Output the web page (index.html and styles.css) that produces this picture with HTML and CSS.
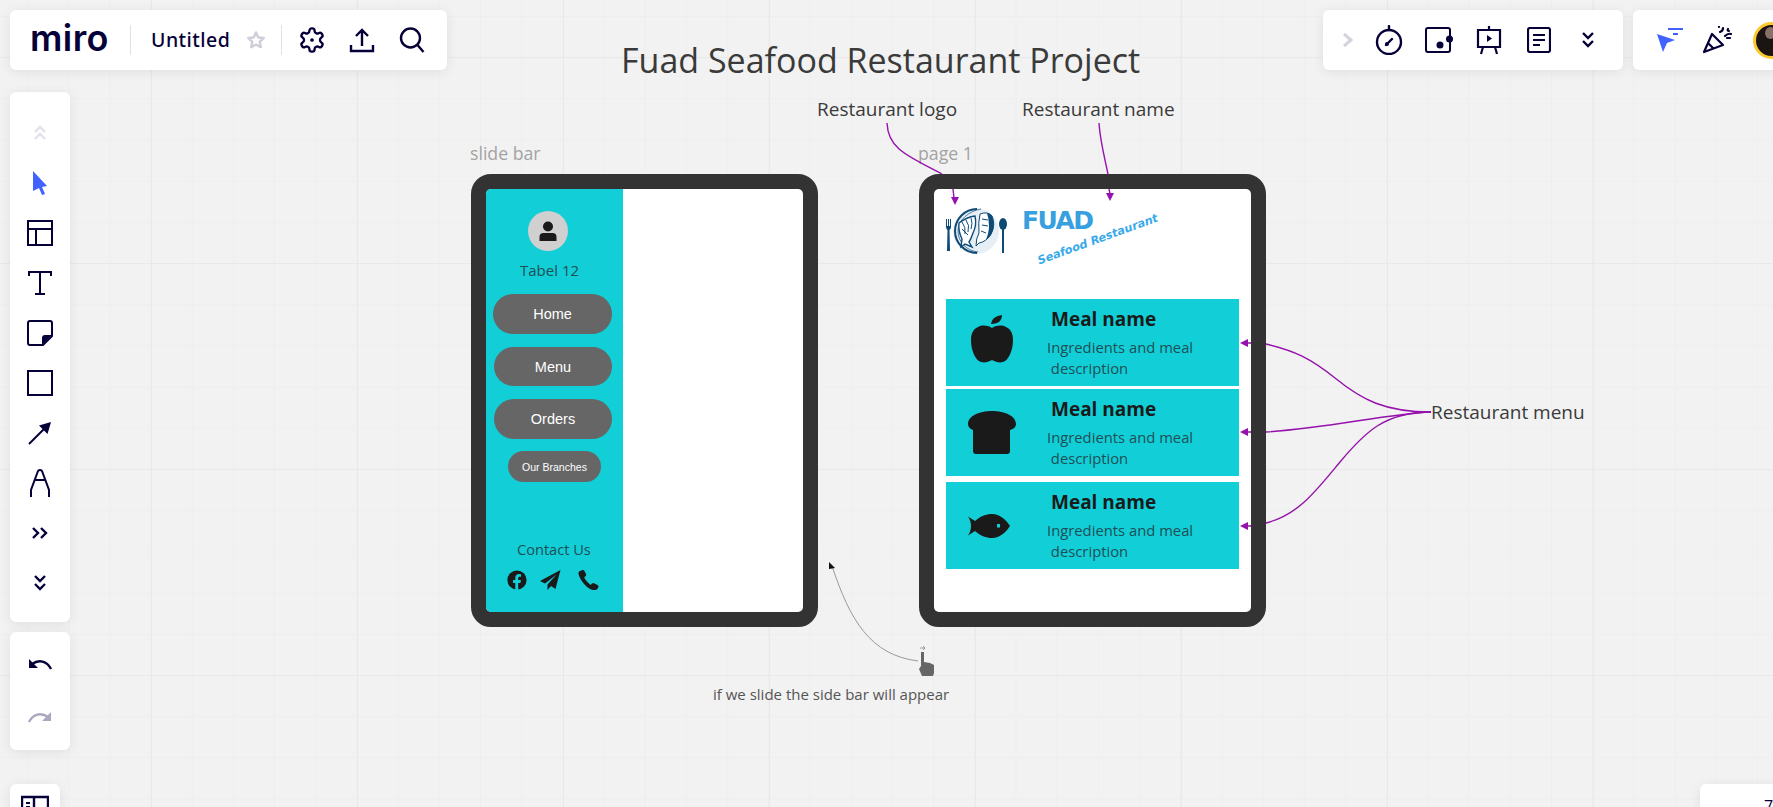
FILE: index.html
```html
<!doctype html>
<html lang="en">
    <head>
        <meta charset="UTF-8" />
        <meta name="viewport" content="width=device-width, initial-scale=1.0" />
        <title>Untitled, Miro</title>
        <link rel="stylesheet" href="styles.css">
    </head>
    <body>
        <main class="board">
            <h1 class="board-title">Fuad Seafood Restaurant Project</h1>
            <div class="note note-logo">Restaurant logo</div>
            <div class="note note-name">Restaurant name</div>
            <div class="note note-menu">Restaurant menu</div>
            <div class="caption caption-slide">slide bar</div>
            <div class="caption caption-page">page 1</div>
            <div class="hint">if we slide the side bar will appear</div>

            <!-- tablet 1: side bar open -->
            <section class="tablet tablet-slide">
                <div class="tablet-screen">
                    <aside class="sidebar">
                        <div class="avatar">
                            <svg width="22" height="22" viewBox="0 0 22 22" fill="#1a1a1a">
                                <circle cx="11" cy="6.5" r="5"></circle>
                                <path d="M2.5 21v-4q0-4 4-4h9q4 0 4 4v4z"></path>
                            </svg>
                        </div>
                        <div class="table-name">Tabel 12</div>
                        <a class="pill pill-home">Home</a>
                        <a class="pill pill-menu">Menu</a>
                        <a class="pill pill-orders">Orders</a>
                        <a class="pill pill-small">Our Branches</a>
                        <div class="contact">
                            <div class="contact-title">Contact Us</div>
                            <div class="contact-icons">
                                <svg width="20" height="20" viewBox="0 0 20 20">
                                    <circle cx="10" cy="10" r="9.6" fill="#1a1a1a"></circle>
                                    <path fill="#12ced6" d="M8.3 20v-7H6v-3h2.3V7.8c0-2.5 1.5-3.8 3.7-3.8l2 .2v2.5h-1.2c-1.2 0-1.6.7-1.6 1.500V10h2.700l-.4 3h-2.300v7z"></path>
                                </svg>
                                <svg width="21" height="20" viewBox="0 0 21 20" fill="#1a1a1a">
                                    <path d="M20.500 0 0 11l5 2.500L16.500 4.500 7.500 14.500V20l3.500-4 4.500 3z"></path>
                                </svg>
                                <svg width="21" height="20" viewBox="0 0 21 20" fill="#1a1a1a">
                                    <path d="M4.500 0 1 1.500C0 2.500 .5 5 2 8c2 4 5.500 8.500 10 11 2 1 5 1.500 7 .5l1.500-2.500c.2-1-.2-1.500-1-2l-3.500-1.800c-.8-.4-1.500-.2-2 .3l-1.300 1.500C10 13 7.500 10 6.200 7.500l1.500-1.500c.5-.5.6-1 .4-1.700L6.300 .8C6 .2 5.300-.2 4.500 0z"></path>
                                </svg>
                            </div>
                        </div>
                    </aside>
                </div>
            </section>

            <!-- tablet 2: page 1 -->
            <section class="tablet tablet-page">
                <div class="tablet-screen tablet-screen-page">
                    <header class="brand">
                        <svg class="brand-mark" width="64" height="48" viewBox="0 0 64 48">
                            <g fill="#0e4a76">
                                <path d="M1 12h1v7h1v-7h1v7h1v-7h1v8q0 2-1.500 3l.5 21h-3l.5-21Q1 22 1 20z"></path>
                                <ellipse cx="58" cy="17" rx="4" ry="6"></ellipse>
                                <rect x="57" y="21" width="2" height="25"></rect>
                            </g>
                            <circle cx="31" cy="24" r="23" fill="#e6eff5"></circle>
                            <path d="M32 2C20 2 10 12 10 24s10 22 22 22" fill="none" stroke="#0e4a76" stroke-width="2"></path>
                            <path d="M36 2C24 4 13 13 13 24s9 20 20 21" fill="none" stroke="#0e4a76" stroke-width=".7"></path>
                            <!-- fish -->
                            <path d="M14 16q8-6 16-7 2 9-2 17-2 6-4 9l3 5-7-3-4 3 1-8q-4-8-3-16z" fill="#fff" stroke="#0e4a76" stroke-width="1.400"></path>
                            <path d="M17 15q4 5 3 12M21 13q4 5 2 12M26 11q2 5 0 11M17 22l6 6" stroke="#0e4a76" fill="none"></path>
                            <!-- shrimp -->
                            <path d="M35 7q8-3 12 2 4 9-1 18-5 8-12 9l-3 3q0-8 3-13-1-10 1-19z" fill="#fff" stroke="#0e4a76"></path>
                            <path d="M42 6q5 1 6 6 2 9-2 16-2 3-5 5 3-8 3-14 0-7-2-13z" fill="#0e4a76"></path>
                            <path d="M37 12l6 1M37 18l6 1M36 24l5 2" stroke="#0e4a76" fill="none"></path>
                        </svg>
                        <div class="brand-name">FUAD</div>
                        <div class="brand-tag">Seafood Restaurant</div>
                    </header>
                    <div class="meal-list">
                        <article class="meal">
                            <div class="meal-icon">
                                <svg width="44" height="58" viewBox="0 0 44 58" fill="#1a1a1a">
                                    <path d="M21 10c1-6 5-8 11-9 0 5-3 9-11 9z"></path>
                                    <path d="M22 14c-5-3-10-3-14-1C3 15 1 20 1 26c0 10 4 20 10 22 4 1 7 0 11-2 4 2 7 3 11 2 6-2 10-12 10-22 0-6-2-11-7-13-4-2-9-2-14 1z"></path>
                                </svg>
                            </div>
                            <div class="meal-text">
                                <h2>Meal name</h2>
                                <p>Ingredients and meal<br>&nbsp;description</p>
                            </div>
                        </article>
                        <article class="meal">
                            <div class="meal-icon">
                                <svg width="48" height="44" viewBox="0 0 48 44" fill="#1a1a1a">
                                    <path d="M24 0C11 0 0 5 0 13c0 3 2 5 5 6v21c0 2 1 3 3 3h31c2 0 3-1 3-3V19c4-1 6-3 6-6C48 5 37 0 24 0z"></path>
                                </svg>
                            </div>
                            <div class="meal-text">
                                <h2>Meal name</h2>
                                <p>Ingredients and meal<br>&nbsp;description</p>
                            </div>
                        </article>
                        <article class="meal meal-last">
                            <div class="meal-icon meal-icon-fish">
                                <svg width="42" height="24" viewBox="0 0 42 24">
                                    <path fill="#1a1a1a" d="M0 2.500 7 7C12 2.500 18 0 24 0c8 0 14 6 18 12-4 6-10 12-18 12-6 0-12-2.500-17-7L0 21.500c2-3 3-6 3-9.500S2 5.500 0 2.500z"></path>
                                    <rect x="29" y="10" width="3" height="3.500" fill="#12ced6"></rect>
                                </svg>
                            </div>
                            <div class="meal-text">
                                <h2>Meal name</h2>
                                <p>Ingredients and meal<br>&nbsp;description</p>
                            </div>
                        </article>
                    </div>
                </div>
            </section>

            <!-- connectors, drawn in board coordinates -->
            <svg class="connectors" width="1773" height="807" viewBox="0 0 1773 807" fill="none">
                <g stroke="#9510ac" stroke-width="1.400">
                    <path d="M887 123C888 148 905 155 942 174"></path>
                    <path d="M953 189L954 198"></path>
                    <path d="M1099 123C1100 140 1104 155 1108 174"></path>
                    <path d="M1109 189L1110 194"></path>
                    <path d="M1431 412C1385 412 1362 400 1335 378 1310 358 1295 351 1266 344"></path>
                    <path d="M1431 412C1385 414 1330 428 1266 432"></path>
                    <path d="M1431 412C1385 412 1365 432 1340 462 1315 492 1298 515 1266 523"></path>
                    <path d="M1251 343H1246M1251 432H1246M1251 526H1246"></path>
                </g>
                <g fill="#9510ac">
                    <path d="M955 205 951 197H959z"></path>
                    <path d="M1110 201 1106 193H1114z"></path>
                    <path d="M1240 343 1248 339V347z"></path>
                    <path d="M1240 432 1248 428V436z"></path>
                    <path d="M1240 526 1248 522V530z"></path>
                </g>
                <path d="M918 661C870 655 850 620 832 566" stroke="#999" stroke-width="1"></path>
                <path d="M829 562 835 568 829 569z" fill="#111"></path>
                <path d="M920 648h5M923 646l2 2-2 2" stroke="#666" stroke-width=".6"></path>
                <path fill="#666" d="M921 652h3v10l6 1 4 2v8l-1 3h-11l-3-7 2-3z"></path>
            </svg>
        </main>

        <!-- board ui -->
        <div class="panel panel-top">
            <span class="miro-logo">miro</span>
            <span class="panel-divider"></span>
            <span class="board-name">Untitled</span>
            <svg class="star" width="20" height="20" viewBox="0 0 24 24" fill="none" stroke="#cfcfdb" stroke-width="3" stroke-linejoin="round">
                <path d="M12 3l2.800 5.900 6.400.8-4.700 4.400 1.200 6.400L12 17.400l-5.700 3.100 1.200-6.400-4.700-4.400 6.400-.8z"></path>
            </svg>
            <span class="panel-divider"></span>
            <div class="top-tools">
                <svg width="28" height="28" viewBox="0 0 24 24" fill="none" stroke="#050038" stroke-width="2" stroke-linejoin="round">
                    <path d="M12.220 2h-.44a2 2 0 0 0-2 2v.18a2 2 0 0 1-1 1.730l-.43.25a2 2 0 0 1-2 0l-.15-.08a2 2 0 0 0-2.730.73l-.22.38a2 2 0 0 0 .73 2.730l.15.1a2 2 0 0 1 1 1.720v.51a2 2 0 0 1-1 1.740l-.15.09a2 2 0 0 0-.73 2.730l.22.38a2 2 0 0 0 2.730.73l.15-.08a2 2 0 0 1 2 0l.43.25a2 2 0 0 1 1 1.730V20a2 2 0 0 0 2 2h.44a2 2 0 0 0 2-2v-.18a2 2 0 0 1 1-1.730l.43-.25a2 2 0 0 1 2 0l.15.08a2 2 0 0 0 2.730-.73l.22-.39a2 2 0 0 0-.73-2.730l-.15-.08a2 2 0 0 1-1-1.740v-.5a2 2 0 0 1 1-1.740l.15-.09a2 2 0 0 0 .73-2.730l-.22-.38a2 2 0 0 0-2.730-.73l-.15.08a2 2 0 0 1-2 0l-.43-.25a2 2 0 0 1-1-1.730V4a2 2 0 0 0-2-2z"></path>
                    <circle cx="12" cy="12" r="1.600" fill="#050038" stroke="none"></circle>
                </svg>
                <svg width="28" height="28" viewBox="0 0 28 28" fill="none" stroke="#050038" stroke-width="2.400">
                    <path d="M14 20V4M8 10l6-6 6 6M3 19v6h22v-6"></path>
                </svg>
                <svg width="28" height="28" viewBox="0 0 28 28" fill="none" stroke="#050038" stroke-width="2.400">
                    <circle cx="12.500" cy="12" r="9.500"></circle>
                    <path d="M19.500 19l6 7"></path>
                </svg>
            </div>
        </div>

        <div class="panel panel-tools">
            <div class="tool">
                <svg width="14" height="16" viewBox="0 0 14 16" fill="none" stroke="#e2e2ea" stroke-width="2.400">
                    <path d="M2 7l5-5 5 5M2 14l5-5 5 5"></path>
                </svg>
            </div>
            <div class="tool">
                <svg width="16" height="26" viewBox="0 0 16 26">
                    <path fill="#4262ff" d="M1 1l14 15-5 1 3 7-3 1-3-7-6 3z"></path>
                </svg>
            </div>
            <div class="tool">
                <svg width="26" height="26" viewBox="0 0 26 26" fill="none" stroke="#050038" stroke-width="2">
                    <path d="M1 1h24v24H1zM1 9h24M9 9v16"></path>
                </svg>
            </div>
            <div class="tool">
                <svg width="24" height="24" viewBox="0 0 24 24" fill="none" stroke="#050038" stroke-width="2">
                    <path d="M1 5V1h22v4M12 1v22M7 23h10"></path>
                </svg>
            </div>
            <div class="tool">
                <svg width="26" height="26" viewBox="0 0 26 26">
                    <path d="M3 1h20q2 0 2 2v13l-9 9H3q-2 0-2-2V3q0-2 2-2z" fill="none" stroke="#050038" stroke-width="2"></path>
                    <path d="M25 15h-7q-3 0-3 3v7z" fill="#050038"></path>
                </svg>
            </div>
            <div class="tool">
                <svg width="26" height="26" viewBox="0 0 26 26" fill="none" stroke="#050038" stroke-width="2">
                    <path d="M1 1h24v24H1z"></path>
                </svg>
            </div>
            <div class="tool">
                <svg width="24" height="24" viewBox="0 0 24 24">
                    <path d="M1 23 16 8" stroke="#050038" stroke-width="2"></path>
                    <path d="M23 1 11 4.500l8.500 8.500z" fill="#050038"></path>
                </svg>
            </div>
            <div class="tool">
                <svg width="22" height="30" viewBox="0 0 22 30" fill="none" stroke="#050038" stroke-width="2">
                    <path d="M2 29v-7L9 3q2-2 4 0l7 19v7M6 12h10"></path>
                </svg>
            </div>
            <div class="tool">
                <svg width="16" height="12" viewBox="0 0 16 12" fill="none" stroke="#050038" stroke-width="2.400">
                    <path d="M1 1l5 5-5 5M9 1l5 5-5 5"></path>
                </svg>
            </div>
            <div class="tool">
                <svg width="12" height="16" viewBox="0 0 12 16" fill="none" stroke="#050038" stroke-width="2.400">
                    <path d="M1 1l5 5 5-5M1 9l5 5 5-5"></path>
                </svg>
            </div>
        </div>

        <div class="panel panel-history">
            <div class="tool">
                <svg width="24" height="12" viewBox="0 0 24 12">
                    <path d="M23 11C19 3 11 1 4 6" fill="none" stroke="#050038" stroke-width="2.400"></path>
                    <path d="M1 1v9h9z" fill="#050038"></path>
                </svg>
            </div>
            <div class="tool">
                <svg width="24" height="12" viewBox="0 0 24 12">
                    <path d="M1 11C5 3 13 1 20 6" fill="none" stroke="#aaa8be" stroke-width="2.400"></path>
                    <path d="M23 1v9h-9z" fill="#aaa8be"></path>
                </svg>
            </div>
        </div>

        <div class="panel panel-corner">
            <svg width="28" height="28" viewBox="0 0 28 28" fill="none" stroke="#050038" stroke-width="2.400">
                <path d="M1 2h26v24H1zM13 2v24"></path>
                <path d="M5 8h4M5 12h4" stroke-width="2"></path>
            </svg>
        </div>

        <div class="panel panel-zoom"><span class="zoom-value">7</span></div>

        <div class="panel panel-apps">
            <svg width="12" height="16" viewBox="0 0 12 16" fill="none" stroke="#d4d3df" stroke-width="3">
                <path d="M2 2l7 6-7 6"></path>
            </svg>
            <svg width="28" height="30" viewBox="0 0 28 30" fill="none" stroke="#050038" stroke-width="2.400">
                <circle cx="14" cy="17" r="12"></circle>
                <path d="M14 1v4M11 20l6-6" stroke-linecap="round"></path>
                <circle cx="12" cy="19" r="2" fill="#050038" stroke="none"></circle>
            </svg>
            <svg width="28" height="28" viewBox="0 0 28 28">
                <path d="M23 2H3Q1 2 1 4v20q0 2 2 2h20q2 0 2-2V4q0-2-2-2z" fill="none" stroke="#050038" stroke-width="2"></path>
                <circle cx="15" cy="19" r="3.500" fill="#050038"></circle>
                <circle cx="24.500" cy="13" r="3.500" fill="#050038"></circle>
            </svg>
            <svg width="26" height="30" viewBox="0 0 26 30" fill="none" stroke="#050038" stroke-width="2.200">
                <path d="M2 5h22v17H2zM13 1v4M7 22l-2 7M19 22l2 7"></path>
                <path d="M11 10l5 3.500-5 3.500z" fill="#050038" stroke="none"></path>
            </svg>
            <svg width="24" height="26" viewBox="0 0 24 26" fill="none" stroke="#050038" stroke-width="2.200">
                <path d="M3 1h18q2 0 2 2v20q0 2-2 2H3q-2 0-2-2V3q0-2 2-2zM6 8h12M6 13h12M6 18h7"></path>
            </svg>
            <svg width="12" height="16" viewBox="0 0 12 16" fill="none" stroke="#050038" stroke-width="2.400">
                <path d="M1 1l5 5 5-5M1 9l5 5 5-5"></path>
            </svg>
        </div>

        <div class="panel panel-user">
            <svg width="27" height="24" viewBox="0 0 27 24">
                <path fill="#4262ff" d="M0 6l18 6-8 3-4 9z"></path>
                <path d="M11 1h15M16 6h5" stroke="#4262ff" stroke-width="2"></path>
            </svg>
            <svg width="29" height="28" viewBox="0 0 29 28" fill="none" stroke="#050038" stroke-width="2.200" stroke-linejoin="round">
                <path d="M1 26 9 8l11 11zM5 17l6 6"></path>
                <path d="M17 6q3-1 3-4M22 10q3-3 6-2M16 1h.01M25 3q-1 2 1 2M24 12h3" stroke-linecap="round"></path>
            </svg>
            <div class="user-photo"><span class="user-head"></span></div>
        </div>
    </body>
</html>
```

FILE: styles.css
```css
* {
    margin: 0;
    padding: 0;
    box-sizing: border-box;
}

body {
    width: 1773px;
    height: 807px;
    overflow: hidden;
    position: relative;
    font-family: "Open Sans", sans-serif;
    background: #f2f2f2;
}

.board {
    position: absolute;
    top: 0;
    left: 0;
    width: 1773px;
    height: 807px;
    background-color: #f2f2f2;
    background-image:
        linear-gradient(to right, #e9e9e9 1.5px, transparent 1.5px),
        linear-gradient(to bottom, #e9e9e9 1.5px, transparent 1.5px),
        linear-gradient(to right, #eeeeee 1px, transparent 1px),
        linear-gradient(to bottom, #eeeeee 1px, transparent 1px);
    background-size: 206px 206px, 206px 206px, 41.2px 41.2px, 41.2px 41.2px;
    background-position: 151px 0, 0 57px, 27px 0, 0 16px;
}

/* things placed on the board */

.board-title {
    position: absolute;
    left: 621px;
    top: 37px;
    font-size: 34px;
    line-height: 46px;
    font-weight: 400;
    color: #3a3a3a;
    white-space: nowrap;
}

.note {
    position: absolute;
    font-size: 19px;
    line-height: 25px;
    color: #3a3a3a;
    white-space: nowrap;
}

.note-logo {
    left: 817px;
    top: 97px;
}

.note-name {
    left: 1022px;
    top: 97px;
}

.note-menu {
    left: 1431px;
    top: 400px;
}

.caption {
    position: absolute;
    font-size: 17.7px;
    line-height: 24px;
    color: #a3a3a3;
    white-space: nowrap;
}

.caption-slide {
    left: 470px;
    top: 141px;
}

.caption-page {
    left: 918px;
    top: 141px;
}

.hint {
    position: absolute;
    left: 713px;
    top: 684px;
    font-size: 15px;
    line-height: 21px;
    color: #555;
    white-space: nowrap;
}

.connectors {
    position: absolute;
    top: 0;
    left: 0;
    pointer-events: none;
}

/* tablets */

.tablet {
    position: absolute;
    top: 174px;
    width: 347px;
    height: 453px;
    border: 15px solid #333;
    border-radius: 20px;
    background: #333;
}

.tablet-slide {
    left: 471px;
}

.tablet-page {
    left: 919px;
}

.tablet-screen {
    display: flex;
    height: 100%;
    background: #fff;
    border-radius: 5px;
    overflow: hidden;
}

.tablet-screen-page {
    flex-direction: column;
}

/* side bar */

.sidebar {
    width: 137px;
    height: 100%;
    padding-top: 22px;
    padding-bottom: 22px;
    background: #12ced6;
    display: flex;
    flex-direction: column;
    align-items: flex-start;
}

.avatar {
    width: 40px;
    height: 40px;
    margin-left: 42px;
    border-radius: 50%;
    background: #d0d0d0;
    display: flex;
    align-items: center;
    justify-content: center;
}

.table-name {
    margin-top: 9px;
    margin-left: 34px;
    font-size: 15px;
    line-height: 20px;
    color: #1f4f56;
}

.pill {
    display: flex;
    align-items: center;
    justify-content: center;
    background: #666;
    color: #fff;
    border-radius: 20px;
    font-family: "Liberation Sans", sans-serif;
    font-size: 14.5px;
}

.pill-home {
    width: 119px;
    height: 40px;
    margin-top: 14px;
    margin-left: 7px;
}

.pill-menu {
    width: 118px;
    height: 39px;
    margin-top: 13px;
    margin-left: 8px;
}

.pill-orders {
    width: 118px;
    height: 40px;
    margin-top: 13px;
    margin-left: 8px;
}

.pill-small {
    width: 93px;
    height: 31px;
    margin-top: 12px;
    margin-left: 22px;
    font-size: 10.5px;
}

.contact {
    margin-top: auto;
    width: 100%;
    padding-left: 21px;
}

.contact-title {
    margin-left: 10px;
    font-size: 14.6px;
    line-height: 20px;
    color: #1f4f56;
    margin-bottom: 11px;
}

.contact-icons {
    display: flex;
    align-items: center;
    gap: 13px;
}

.contact-icons svg + svg + svg {
    margin-left: 4px;
}

/* page 1 */

.brand {
    position: relative;
    height: 110px;
    flex-shrink: 0;
}

.brand-mark {
    position: absolute;
    left: 11px;
    top: 18px;
}

.brand-name {
    position: absolute;
    left: 88px;
    top: 17px;
    font-family: "DejaVu Sans", sans-serif;
    font-size: 25px;
    line-height: 30px;
    font-weight: 700;
    letter-spacing: -1.6px;
    color: #38a0de;
}

.brand-tag {
    position: absolute;
    left: 100px;
    top: 42px;
    font-family: "DejaVu Sans", sans-serif;
    font-size: 11.4px;
    line-height: 16px;
    font-weight: 700;
    font-style: italic;
    color: #3aa9ea;
    white-space: nowrap;
    transform: rotate(-20deg);
}

.meal-list {
    padding: 0 12px;
    display: flex;
    flex-direction: column;
}

.meal {
    height: 87px;
    margin-bottom: 3px;
    background: #12ced6;
    display: flex;
}

.meal-last {
    margin-top: 3px;
}

.meal-icon {
    width: 92px;
    margin-right: 9px;
    flex-shrink: 0;
    display: flex;
    align-items: center;
    justify-content: center;
}

.meal-icon-fish svg {
    margin-left: -6px;
}

.meal-text {
    padding-top: 7px;
}

.meal-text h2 {
    padding-left: 4px;
    font-size: 19px;
    line-height: 27px;
    font-weight: 700;
    color: #1a1a1a;
}

.meal-text p {
    margin-top: 4px;
    font-size: 14.8px;
    line-height: 21px;
    color: #1f4f56;
}

/* board ui panels */

.panel {
    position: absolute;
    background: #fff;
    border-radius: 6px;
    box-shadow: 0 2px 12px rgba(5, 0, 56, 0.08);
}

.panel-top {
    left: 10px;
    top: 10px;
    width: 437px;
    height: 60px;
    padding-left: 20px;
    display: flex;
    align-items: center;
}

.miro-logo {
    width: 79px;
    font-family: "Inter", sans-serif;
    font-size: 36px;
    line-height: 40px;
    font-weight: 600;
    letter-spacing: 0.4px;
    color: #050038;
    margin-top: -4px;
}

.panel-divider {
    width: 1px;
    height: 30px;
    background: #e0e0e6;
}

.miro-logo + .panel-divider {
    margin-left: 21px;
}

.board-name {
    margin-left: 20px;
    width: 79px;
    font-family: "Noto Sans", sans-serif;
    font-size: 19.5px;
    font-weight: 500;
    letter-spacing: 0.5px;
    color: #050038;
    margin-top: -1px;
}

.star {
    margin-left: 16px;
    margin-right: 15px;
}

.top-tools {
    margin-left: 16px;
    display: flex;
    gap: 22px;
}

.panel-tools {
    left: 10px;
    top: 92px;
    width: 60px;
    height: 530px;
    padding-top: 16px;
}

.panel-history {
    left: 10px;
    top: 632px;
    width: 60px;
    height: 118px;
    padding-top: 7px;
    display: flex;
    flex-direction: column;
    gap: 3px;
}

.tool {
    height: 50px;
    display: flex;
    align-items: center;
    justify-content: center;
}

.panel-corner {
    left: 10px;
    top: 784px;
    width: 50px;
    height: 60px;
    padding-top: 11px;
    padding-left: 11px;
}

.panel-zoom {
    left: 1700px;
    top: 784px;
    width: 100px;
    height: 60px;
}

.zoom-value {
    position: absolute;
    left: 64px;
    top: 12px;
    font-size: 16px;
    line-height: 20px;
    color: #050038;
}

.panel-apps {
    left: 1323px;
    top: 10px;
    width: 300px;
    height: 60px;
    padding-left: 19px;
    display: flex;
    align-items: center;
}

.panel-apps svg:nth-child(1) {
    margin-right: 21px;
}

.panel-apps svg:nth-child(2) {
    margin-right: 22px;
}

.panel-apps svg:nth-child(3) {
    margin-right: 23px;
}

.panel-apps svg:nth-child(4) {
    margin-right: 25px;
}

.panel-apps svg:nth-child(5) {
    margin-right: 31px;
}

.panel-user {
    left: 1633px;
    top: 10px;
    width: 180px;
    height: 60px;
    padding-left: 24px;
    display: flex;
    align-items: center;
    gap: 19px;
}

.user-photo {
    width: 37px;
    height: 37px;
    margin-left: 2px;
    border-radius: 50%;
    border: 3px solid #fdc92e;
    background: #1a1413;
    overflow: hidden;
    position: relative;
}

.user-head {
    position: absolute;
    top: 2px;
    left: 9px;
    width: 11px;
    height: 12px;
    border-radius: 50%;
    background: #8a6f66;
}
```
